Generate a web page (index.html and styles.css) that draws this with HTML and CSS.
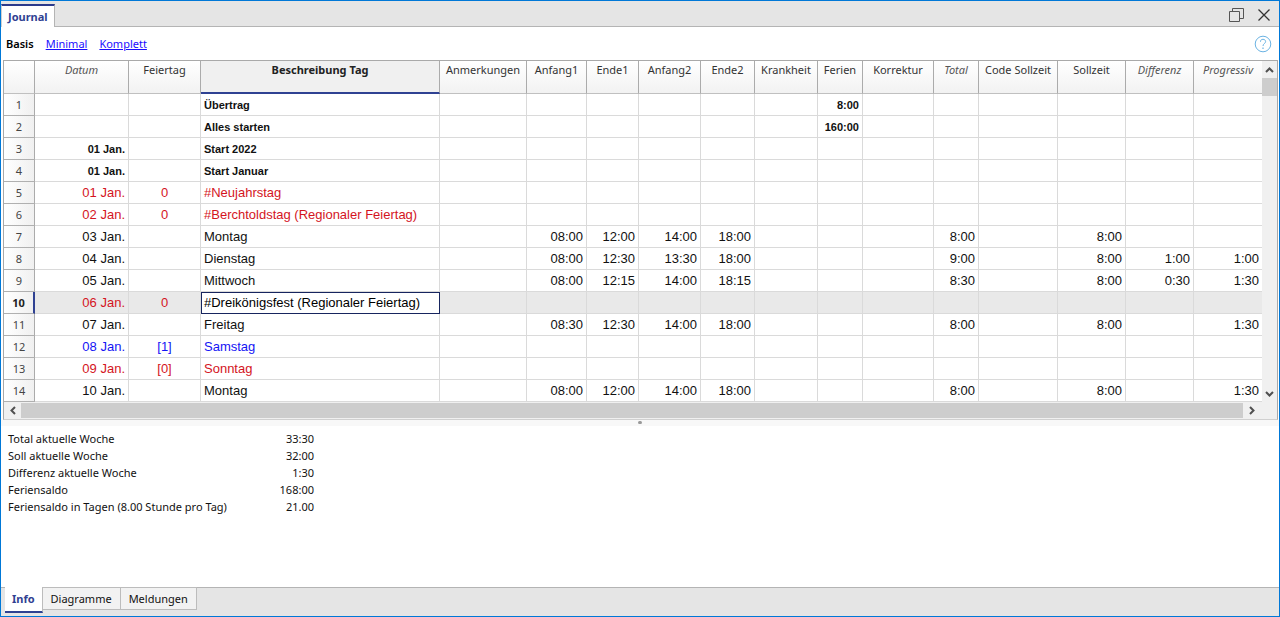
FILE: index.html
```html
<!DOCTYPE html>
<html lang="de">
<head>
<meta charset="utf-8">
<title>Journal</title>
<link rel="stylesheet" href="styles.css">
</head>
<body>
<div class="window">
  <header class="titlebar">
    <button class="doc-tab">Journal</button>
    <div class="window-controls">
      <button class="icon-button" aria-label="Wiederherstellen">
        <svg width="16" height="16" viewBox="0 0 16 16" fill="none" stroke="#555" stroke-width="1"><path d="M4.500 4V1.500H15.500V11.500H12"/><path d="M1.500 4.500H11.500V14.500H1.500Z"/></svg>
      </button>
      <button class="icon-button" aria-label="Schliessen">
        <svg width="14" height="14" viewBox="0 0 14 14" fill="none" stroke="#333" stroke-width="1.300"><path d="M1.500 1.500L12.500 12.500M12.500 1.500L1.500 12.500"/></svg>
      </button>
    </div>
  </header>
  <nav class="views">
    <span class="view-current">Basis</span>
    <a href="#minimal">Minimal</a>
    <a href="#komplett">Komplett</a>
    <button class="icon-button help" aria-label="Hilfe">
      <svg width="18" height="18" viewBox="0 0 18 18" fill="none" stroke="#6bb3e3" stroke-width="1"><circle cx="9" cy="9" r="7.800"/><path d="M6.500 7V6.500C6.500 5 7.500 4.300 9 4.300S11.600 5.200 11.600 6.600C11.600 8.500 9 8.600 9 11"/><path d="M9 12.500V14" stroke-width="1.200"/></svg>
    </button>
  </nav>
  <section class="sheet">
    <div class="sheet-body">
      <table class="grid">
        <colgroup>
          <col class="w31"><col class="w94"><col class="w72"><col class="w239"><col class="w87"><col class="w60"><col class="w52"><col class="w62"><col class="w54"><col class="w63"><col class="w45"><col class="w71"><col class="w45"><col class="w79"><col class="w68"><col class="w68"><col class="w68">
        </colgroup>
        <thead>
          <tr><th></th><th class="computed">Datum</th><th>Feiertag</th><th class="active-col">Beschreibung Tag</th><th>Anmerkungen</th><th>Anfang1</th><th>Ende1</th><th>Anfang2</th><th>Ende2</th><th>Krankheit</th><th>Ferien</th><th>Korrektur</th><th class="computed">Total</th><th>Code Sollzeit</th><th>Sollzeit</th><th class="computed">Differenz</th><th class="computed">Progressiv</th></tr>
        </thead>
        <tbody>
          <tr class="bold"><th>1</th><td></td><td></td><td>Übertrag</td><td></td><td></td><td></td><td></td><td></td><td></td><td>8:00</td><td></td><td></td><td></td><td></td><td></td><td></td></tr>
          <tr class="bold"><th>2</th><td></td><td></td><td>Alles starten</td><td></td><td></td><td></td><td></td><td></td><td></td><td>160:00</td><td></td><td></td><td></td><td></td><td></td><td></td></tr>
          <tr class="bold"><th>3</th><td>01 Jan.</td><td></td><td>Start 2022</td><td></td><td></td><td></td><td></td><td></td><td></td><td></td><td></td><td></td><td></td><td></td><td></td><td></td></tr>
          <tr class="bold"><th>4</th><td>01 Jan.</td><td></td><td>Start Januar</td><td></td><td></td><td></td><td></td><td></td><td></td><td></td><td></td><td></td><td></td><td></td><td></td><td></td></tr>
          <tr class="red"><th>5</th><td>01 Jan.</td><td>0</td><td>#Neujahrstag</td><td></td><td></td><td></td><td></td><td></td><td></td><td></td><td></td><td></td><td></td><td></td><td></td><td></td></tr>
          <tr class="red"><th>6</th><td>02 Jan.</td><td>0</td><td>#Berchtoldstag (Regionaler Feiertag)</td><td></td><td></td><td></td><td></td><td></td><td></td><td></td><td></td><td></td><td></td><td></td><td></td><td></td></tr>
          <tr><th>7</th><td>03 Jan.</td><td></td><td>Montag</td><td></td><td>08:00</td><td>12:00</td><td>14:00</td><td>18:00</td><td></td><td></td><td></td><td>8:00</td><td></td><td>8:00</td><td></td><td></td></tr>
          <tr><th>8</th><td>04 Jan.</td><td></td><td>Dienstag</td><td></td><td>08:00</td><td>12:30</td><td>13:30</td><td>18:00</td><td></td><td></td><td></td><td>9:00</td><td></td><td>8:00</td><td>1:00</td><td>1:00</td></tr>
          <tr><th>9</th><td>05 Jan.</td><td></td><td>Mittwoch</td><td></td><td>08:00</td><td>12:15</td><td>14:00</td><td>18:15</td><td></td><td></td><td></td><td>8:30</td><td></td><td>8:00</td><td>0:30</td><td>1:30</td></tr>
          <tr class="red current"><th>10</th><td>06 Jan.</td><td>0</td><td class="selected">#Dreikönigsfest (Regionaler Feiertag)</td><td></td><td></td><td></td><td></td><td></td><td></td><td></td><td></td><td></td><td></td><td></td><td></td><td></td></tr>
          <tr><th>11</th><td>07 Jan.</td><td></td><td>Freitag</td><td></td><td>08:30</td><td>12:30</td><td>14:00</td><td>18:00</td><td></td><td></td><td></td><td>8:00</td><td></td><td>8:00</td><td></td><td>1:30</td></tr>
          <tr class="blue"><th>12</th><td>08 Jan.</td><td>[1]</td><td>Samstag</td><td></td><td></td><td></td><td></td><td></td><td></td><td></td><td></td><td></td><td></td><td></td><td></td><td></td></tr>
          <tr class="red"><th>13</th><td>09 Jan.</td><td>[0]</td><td>Sonntag</td><td></td><td></td><td></td><td></td><td></td><td></td><td></td><td></td><td></td><td></td><td></td><td></td><td></td></tr>
          <tr><th>14</th><td>10 Jan.</td><td></td><td>Montag</td><td></td><td>08:00</td><td>12:00</td><td>14:00</td><td>18:00</td><td></td><td></td><td></td><td>8:00</td><td></td><td>8:00</td><td></td><td>1:30</td></tr>
        </tbody>
      </table>
      <div class="vscroll">
        <button class="icon-button arrow" aria-label="Nach oben"><svg width="9" height="6" viewBox="0 0 9 6" fill="none" stroke="#505050" stroke-width="2"><path d="M1 5L4.500 1.500L8 5"/></svg></button>
        <div class="vthumb"></div>
        <button class="icon-button arrow" aria-label="Nach unten"><svg width="9" height="6" viewBox="0 0 9 6" fill="none" stroke="#505050" stroke-width="2"><path d="M1 1L4.500 4.500L8 1"/></svg></button>
      </div>
    </div>
    <div class="hscroll">
      <button class="icon-button arrow" aria-label="Nach links"><svg width="6" height="9" viewBox="0 0 6 9" fill="none" stroke="#505050" stroke-width="2"><path d="M5 1L1.500 4.500L5 8"/></svg></button>
      <div class="hthumb"></div>
      <button class="icon-button arrow" aria-label="Nach rechts"><svg width="6" height="9" viewBox="0 0 6 9" fill="none" stroke="#505050" stroke-width="2"><path d="M1 1L4.500 4.500L1 8"/></svg></button>
    </div>
  </section>
  <div class="splitter"><span class="grip"></span></div>
  <section class="info">
    <table class="summary">
      <tr><th>Total aktuelle Woche</th><td>33:30</td></tr>
      <tr><th>Soll aktuelle Woche</th><td>32:00</td></tr>
      <tr><th>Differenz aktuelle Woche</th><td>1:30</td></tr>
      <tr><th>Feriensaldo</th><td>168:00</td></tr>
      <tr><th>Feriensaldo in Tagen (8.00 Stunde pro Tag)</th><td>21.00</td></tr>
    </table>
  </section>
  <footer class="info-tabs">
    <button class="info-tab info-tab-active">Info</button>
    <button class="info-tab">Diagramme</button>
    <button class="info-tab">Meldungen</button>
  </footer>
</div>
</body>
</html>
```
FILE: styles.css
```css
* { box-sizing: border-box; }
body { margin: 0; font: 11px/16px "Noto Sans", "Open Sans", sans-serif; color: #111; }
button { font: inherit; color: inherit; margin: 0; padding: 0; border: 0; background: none; }
.icon-button { display: flex; align-items: center; justify-content: center; }
.window { display: flex; flex-direction: column; min-height: 100vh; border: 1px solid #0078d7; background: #fff; }

.titlebar { display: flex; align-items: stretch; height: 26px; background: linear-gradient(#b4b4b4, #b4b4b4) bottom / 100% 1px no-repeat #e5e5e5; }
.doc-tab { margin-top: 3px; padding: 0 6px; border-top: 2px solid #2b3a8c; border-right: 1px solid #b4b4b4; border-left: 1px solid #d0d0d0; background: #fff; color: #2f4192; font-weight: 700; }
.window-controls { display: flex; gap: 13px; margin-left: auto; padding: 2px 8px 0 0; }

.views { display: flex; align-items: center; gap: 12px; height: 33px; padding: 0 7px 0 5px; }
.view-current { color: #000; font-weight: 600; }
.views a { color: #1a0dff; }
.help { margin-left: auto; }

.sheet { margin: 0 1px 0 2px; border: 1px solid #a9a9a9; border-bottom-color: #d0d0d0; }
.sheet-body { display: flex; }
.grid { flex: 1; width: 0; table-layout: fixed; border-collapse: separate; border-spacing: 0; font: 13px/20px "Liberation Sans", Arial, sans-serif; }
.grid th, .grid td { height: 22px; padding: 0 3px; border-right: 1px solid #dadada; border-bottom: 1px solid #dadada; text-align: right; white-space: nowrap; }
.grid tr > :last-child { border-right: 0; }
.grid td:nth-child(3) { text-align: center; }
.grid td:nth-child(4) { text-align: left; }
.grid thead th { height: 33px; padding: 0; border-right-color: #ababab; border-bottom-color: #c0c0c0; background: linear-gradient(#fff, #f2f2f2); color: #333; font: 11px/18px "Noto Sans", "Open Sans", sans-serif; text-align: center; vertical-align: top; }
.grid thead .computed { font-style: italic; color: #555; }
.grid thead .active-col { border-bottom: 2px solid #2f4192; background: #f0f0f0; color: #222; font-weight: 700; }
.grid tbody th { border-right-color: #ababab; border-bottom-color: #b0b0b0; background: linear-gradient(90deg, #fff, #f0f0f0); color: #444; font: 11px/20px "Noto Sans", "Open Sans", sans-serif; text-align: center; }
.grid .bold td { font-size: 11px; font-weight: bold; }
.red td { color: #d4141e; }
.blue td { color: #1414f5; }
.grid .current td { background: #e9e9e9; }
.grid .current th { border-right: 2px solid #2f4192; color: #222; font-weight: 700; }
.grid .current .selected { background: #fff; color: #000; outline: 1px solid #17255f; outline-offset: -1px; }
.w31 { width: 31px; } .w45 { width: 45px; } .w52 { width: 52px; } .w54 { width: 54px; }
.w60 { width: 60px; } .w62 { width: 62px; } .w63 { width: 63px; } .w68 { width: 68px; }
.w71 { width: 71px; } .w72 { width: 72px; } .w79 { width: 79px; } .w87 { width: 87px; }
.w94 { width: 94px; } .w239 { width: 239px; }

.vscroll { display: flex; flex-direction: column; flex: none; width: 15px; background: #f0f0f0; }
.arrow { flex: none; width: 17px; height: 17px; }
.vscroll .arrow { width: 15px; }
.vscroll .arrow:last-child { margin-top: auto; }
.vthumb { height: 18px; background: #cdcdcd; }
.hscroll { display: flex; height: 17px; padding-right: 17px; background: #f0f0f0; }
.hthumb { flex: 1; height: 15px; margin-top: 1px; background: #cdcdcd; }

.splitter { display: flex; justify-content: center; height: 6px; padding-top: 1px; background: #f8f8f8; }
.grip { width: 4px; height: 3px; border-radius: 2px; background: #999; }

.info { flex: 1; padding: 4px 7px; }
.summary { border-collapse: collapse; }
.summary th { width: 240px; padding: 0; font-weight: normal; text-align: left; line-height: 17px; }
.summary td { width: 66px; padding: 0; text-align: right; line-height: 17px; }

.info-tabs { display: flex; align-items: flex-start; height: 29px; padding-left: 4px; background: linear-gradient(#b4b4b4, #b4b4b4) top / 100% 1px no-repeat #e5e5e5; }
.info-tab { height: 23px; padding: 0 8px; border: 1px solid #bcbcbc; border-left: 0; background: #f2f2f2; }
.info-tab-active { height: 26px; padding: 0 7px; border: 0; border-right: 1px solid #bcbcbc; border-bottom: 2px solid #2f4192; background: #fff; color: #2f4192; font-weight: 700; }
```
